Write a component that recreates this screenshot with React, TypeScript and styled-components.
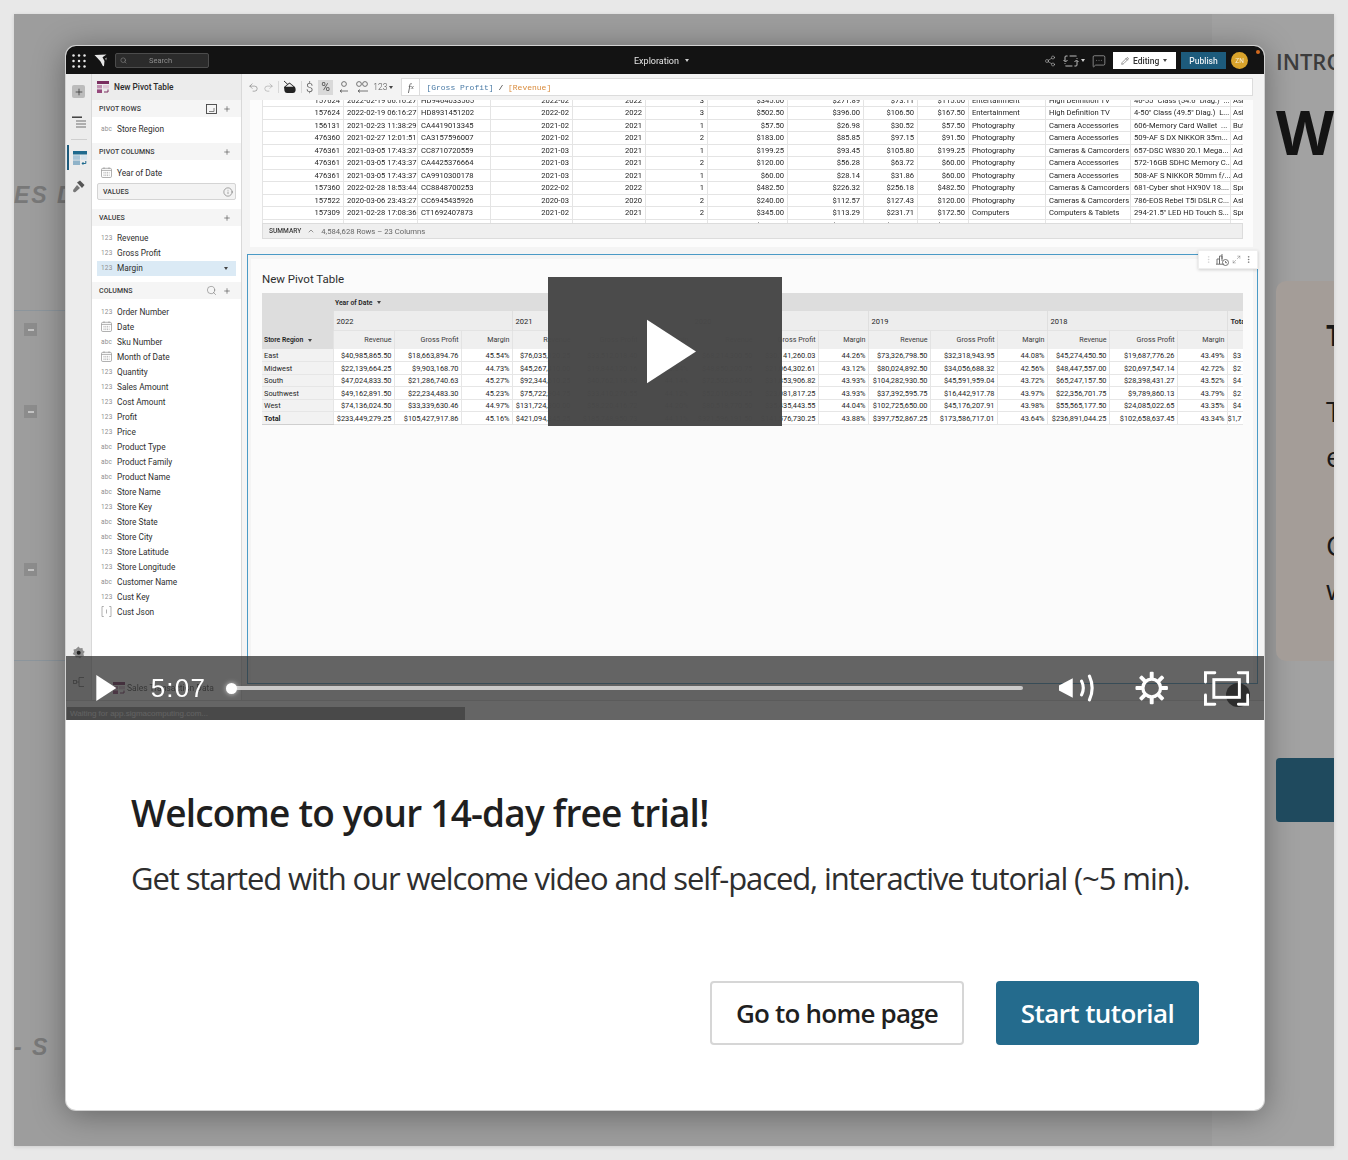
import React from 'react'
import styled, { createGlobalStyle } from 'styled-components'
import {
  ChevronUp,
  Info,
  Maximize2,
  MoreVertical,
  Pencil,
  Plus,
  Redo2,
  Search,
  Share2,
  Undo2,
  MessageSquareMore,
} from 'lucide-react'

const GlobalStyle = createGlobalStyle`
  html, body {
    margin: 0;
    padding: 0;
    background: #e8e8e8;
  }
  * {
    box-sizing: border-box;
  }
`

type FieldKind = '123' | 'abc' | 'date' | 'json'

const COLUMNS: [FieldKind, string][] = [
  ['123', 'Order Number'],
  ['date', 'Date'],
  ['abc', 'Sku Number'],
  ['date', 'Month of Date'],
  ['123', 'Quantity'],
  ['123', 'Sales Amount'],
  ['123', 'Cost Amount'],
  ['123', 'Profit'],
  ['123', 'Price'],
  ['abc', 'Product Type'],
  ['abc', 'Product Family'],
  ['abc', 'Product Name'],
  ['abc', 'Store Name'],
  ['123', 'Store Key'],
  ['abc', 'Store State'],
  ['abc', 'Store City'],
  ['123', 'Store Latitude'],
  ['123', 'Store Longitude'],
  ['abc', 'Customer Name'],
  ['123', 'Cust Key'],
  ['json', 'Cust Json'],
]

const RAW_WIDTHS = [81, 74, 73, 82, 73, 62, 80, 76, 54, 51, 77, 85, 100, 13]
const RAW_LEFT = [false, true, true, false, false, false, false, false, false, false, true, true, true, true]
const RAW_ROWS = [
  ['157624', '2022-02-19 06:16:27', 'HD9464033565', '2022-02', '2022', '3', '$345.00', '$271.89', '$73.11', '$115.00', 'Entertainment', 'High Definition TV', '46-55" Class (54.6" Diag.)  ...', 'Asl'],
  ['157624', '2022-02-19 06:16:27', 'HD8931451202', '2022-02', '2022', '3', '$502.50', '$396.00', '$106.50', '$167.50', 'Entertainment', 'High Definition TV', '4-50" Class (49.5" Diag.)  L...', 'Asl'],
  ['156131', '2021-02-23 11:38:29', 'CA4419013345', '2021-02', '2021', '1', '$57.50', '$26.98', '$30.52', '$57.50', 'Photography', 'Camera Accessories', '606-Memory Card Wallet  ...', 'But'],
  ['476360', '2021-02-27 12:01:51', 'CA3157596007', '2021-02', '2021', '2', '$183.00', '$85.85', '$97.15', '$91.50', 'Photography', 'Camera Accessories', '509-AF S DX NIKKOR 35m...', 'Adi'],
  ['476361', '2021-03-05 17:43:37', 'CC8710720559', '2021-03', '2021', '1', '$199.25', '$93.45', '$105.80', '$199.25', 'Photography', 'Cameras & Camcorders', '657-DSC W830 20.1 Mega...', 'Adi'],
  ['476361', '2021-03-05 17:43:37', 'CA4425376664', '2021-03', '2021', '2', '$120.00', '$56.28', '$63.72', '$60.00', 'Photography', 'Camera Accessories', '572-16GB SDHC Memory C...', 'Adi'],
  ['476361', '2021-03-05 17:43:37', 'CA9910300178', '2021-03', '2021', '1', '$60.00', '$28.14', '$31.86', '$60.00', 'Photography', 'Camera Accessories', '508-AF S NIKKOR 50mm f/...', 'Adi'],
  ['157360', '2022-02-28 18:53:44', 'CC8848700253', '2022-02', '2022', '1', '$482.50', '$226.32', '$256.18', '$482.50', 'Photography', 'Cameras & Camcorders', '681-Cyber shot HX90V 18....', 'Spr'],
  ['157522', '2020-03-06 23:43:27', 'CC6945435926', '2020-03', '2020', '2', '$240.00', '$112.57', '$127.43', '$120.00', 'Photography', 'Cameras & Camcorders', '786-EOS Rebel T5i DSLR C...', 'Asl'],
  ['157309', '2021-02-28 17:08:36', 'CT1692407873', '2021-02', '2021', '2', '$345.00', '$113.29', '$231.71', '$172.50', 'Computers', 'Computers & Tablets', '294-21.5" LED HD Touch S...', 'Spr'],
  ['157344', '2021-02-28 11:21:44', 'CT1694416307', '2021-02', '2021', '1', '$345.00', '$113.29', '$231.71', '$345.00', 'Computers', 'Computers & Tablets', '294-21.5" LED HD Touch S...', 'Spr'],
]

const PIVOT_WIDTHS = [71, 61, 67, 51, 61, 67, 51, 64, 63, 50, 62, 67, 50, 62, 68, 50, 16]
const YEARS: [string, number][] = [
  ['2022', 3],
  ['2021', 3],
  ['2020', 3],
  ['2019', 3],
  ['2018', 3],
]
const PIVOT_ROWS = [
  ['East', '$40,985,865.50', '$18,663,894.76', '45.54%', '$76,035,120.25', '$33,512,018.40', '44.07%', '$68,214,300.50', '$30,141,260.03', '44.26%', '$73,326,798.50', '$32,318,943.95', '44.08%', '$45,274,450.50', '$19,687,776.26', '43.49%', '$3'],
  ['Midwest', '$22,139,664.25', '$9,903,168.70', '44.73%', '$45,267,410.00', '$19,844,120.16', '43.84%', '$48,850,200.75', '$21,064,302.61', '43.12%', '$80,024,892.50', '$34,056,688.32', '42.56%', '$48,447,557.00', '$20,697,547.14', '42.72%', '$2'],
  ['South', '$47,024,833.50', '$21,286,740.63', '45.27%', '$92,344,610.25', '$40,762,118.90', '44.14%', '$72,502,040.00', '$31,853,906.82', '43.93%', '$104,282,930.50', '$45,591,959.04', '43.72%', '$65,247,157.50', '$28,398,431.27', '43.52%', '$4'],
  ['Southwest', '$49,162,891.50', '$22,234,483.30', '45.23%', '$75,722,904.75', '$33,410,276.55', '44.12%', '$52,010,880.25', '$23,081,817.25', '43.93%', '$37,392,595.75', '$16,442,917.78', '43.97%', '$22,356,701.75', '$9,789,860.13', '43.79%', '$2'],
  ['West', '$74,136,024.50', '$33,339,630.46', '44.97%', '$131,724,300.00', '$58,220,416.72', '44.20%', '$80,518,770.50', '$35,435,443.55', '44.04%', '$102,725,650.00', '$45,176,207.91', '43.98%', '$55,565,177.50', '$24,085,022.65', '43.35%', '$4'],
  ['Total', '$233,449,279.25', '$105,427,917.86', '45.16%', '$421,094,345.25', '$185,748,950.73', '44.11%', '$321,596,191.50', '$141,576,730.25', '43.88%', '$397,752,867.25', '$173,586,717.01', '43.64%', '$236,891,044.25', '$102,658,637.45', '43.34%', '$1,7'],
]

const GridIcon = () => (
  <svg width="14" height="14" viewBox="0 0 14 14" fill="#e8e8e8">
    {[1.5, 7, 12.5].flatMap((y) =>
      [1.5, 7, 12.5].map((x) => <circle key={`${x}-${y}`} cx={x} cy={y} r="1.25" />),
    )}
  </svg>
)

const SigmaLogo = () => (
  <svg width="13" height="13" viewBox="0 0 13 13" fill="#e6e6e6">
    <path d="M0.5 1 L12.5 0.5 L8.5 3.2 L10.5 7 L10 12 L9 12.2 L6.5 7.5 Q3.5 4 0.5 1 Z" />
    <path d="M11 4.5 L12.8 3.5 L12.2 6.5 Z" opacity="0.7" />
  </svg>
)

const SwapIcon = () => (
  <svg width="16" height="14" viewBox="0 0 16 14" fill="none" stroke="#cfcfcf" strokeWidth="0.9">
    <path d="M2 7 V3 Q2 2 3 2 H13 Q14 2 14 3 V5 M14 7 V11 Q14 12 13 12 H3 Q2 12 2 11 V9" strokeDasharray="7 2" />
    <path d="M0.5 6 L2.5 8 L4.5 6 M11.5 8 L13.5 6 L15.5 8" />
  </svg>
)

const CalendarIcon = () => (
  <svg width="11" height="11" viewBox="0 0 11 11" fill="none" stroke="#8f8f8f" strokeWidth="0.7">
    <rect x="0.5" y="1.3" width="10" height="9.2" rx="1.3" />
    <path d="M0.5 3.4 H10.5 M3 0.3 V2 M8 0.3 V2" />
    <path d="M2.5 5.4 H8.5 M2.5 7 H8.5 M2.5 8.6 H8.5" strokeDasharray="1 0.8" />
  </svg>
)

const JsonIcon = () => (
  <svg width="11" height="11" viewBox="0 0 11 11" fill="none" stroke="#8f8f8f" strokeWidth="0.7">
    <path d="M2.8 0.5 H1 V10.5 H2.8 M8.2 0.5 H10 V10.5 H8.2 M5.5 3.5 V7.5" />
  </svg>
)

const PivotGlyph = () => (
  <svg width="12" height="12" viewBox="0 0 12 12">
    <rect width="12" height="3" fill="#7a2d5f" />
    <rect y="4" width="5" height="3.4" fill="#c08fb0" />
    <rect y="8.4" width="5" height="3.6" fill="#96487c" />
    <rect x="6" y="4" width="6" height="3.4" fill="#e0c8d7" />
    <path d="M7 11 H11 V8.5" fill="none" stroke="#7a2d5f" strokeWidth="1" />
  </svg>
)

const ActiveTableGlyph = () => (
  <svg width="14" height="14" viewBox="0 0 14 14">
    <rect width="14" height="3.5" fill="#1f6a8e" />
    <rect y="4.3" width="7" height="4.5" fill="#aac6d8" />
    <rect y="9.5" width="7" height="4.5" fill="#8fb3c9" />
    <rect x="7.8" y="4.3" width="6.2" height="4.5" fill="#d5e3ec" />
    <path d="M9 12.5 H12.8 V10 M10.5 11 L9 12.5 L10.5 13.8" fill="none" stroke="#1f6a8e" strokeWidth="1" />
  </svg>
)

const LayersGlyph = () => (
  <svg width="14" height="12" viewBox="0 0 14 12" fill="none" strokeWidth="1.4">
    <path d="M0 1.2 H10" stroke="#333" />
    <path d="M4 5 H14 M4 8 H14 M4 11 H14" stroke="#999" />
  </svg>
)

const HammerGlyph = () => (
  <svg width="13" height="13" viewBox="0 0 13 13" fill="#555">
    <path d="M5 2.5 L8 0.5 L12.5 5 L10 8 Z" />
    <path d="M5 5 L8 8 L3.5 12 Q1.8 12.8 1.2 11.5 Q0.8 10.5 1.5 9.5 Z" fill="#777" />
  </svg>
)

const GearGlyph = () => (
  <svg width="13" height="13" viewBox="0 0 13 13">
    <path d="M6.5 0.5 L8 2.3 L10.5 2 L10.8 4.3 L12.7 5.8 L11.4 7.8 L12 10 L9.7 10.6 L8 12.5 L6.2 11.2 L3.8 11.6 L3.2 9.4 L0.7 8 L2 6 L1.5 3.6 L3.8 3 Z" fill="#8d8d8d" />
    <circle cx="6.7" cy="6.7" r="2" fill="#222" />
  </svg>
)

const TreeGlyph = () => (
  <svg width="12" height="12" viewBox="0 0 12 12" fill="none" stroke="#666" strokeWidth="0.8">
    <rect x="0.5" y="4.5" width="3" height="3" />
    <path d="M3.5 6 H6 M6 1.5 V10.5 M6 1.5 H11 M6 10.5 H11" />
  </svg>
)

const BucketGlyph = () => (
  <svg width="14" height="14" viewBox="0 0 14 14">
    <path d="M1 7 L6.5 2.5 L12 7 Q13 9 12.5 11 Q12 13 10 13 H4 Q2 13 1.5 11 Z" fill="#222" />
    <path d="M1 1 L6.5 6" stroke="#222" strokeWidth="0.9" />
    <path d="M2.5 6.8 L6.5 3.5 L10.5 6.8 Z" fill="#eee" />
  </svg>
)

const DecimalGlyph = ({ double }: { double?: boolean }) => (
  <svg width="14" height="14" viewBox="0 0 14 14" fill="none" stroke="#555" strokeWidth="0.8">
    <circle cx={double ? 4 : 7} cy="4" r="2.4" />
    {double && <circle cx="10" cy="4" r="2.4" />}
    <path d={double ? 'M3 11 H13 M5 9.5 L3 11 L5 12.5' : 'M3 11 H11 M5 9.5 L3 11 L5 12.5'} />
  </svg>
)

const PivotBoxGlyph = () => (
  <svg width="11" height="10" viewBox="0 0 11 10" fill="none" stroke="#444" strokeWidth="0.9">
    <rect x="0.5" y="0.5" width="10" height="9" />
    <path d="M3 7.5 H8 V4" stroke="#777" />
  </svg>
)

const ChartGlyph = () => (
  <svg width="13" height="13" viewBox="0 0 13 13" fill="none" stroke="#666" strokeWidth="0.9">
    <path d="M1 11 V6 H3.5 V11 M3.5 11 V3 H6 V8 M6 1 V6" />
    <path d="M0 11.2 H8" />
    <circle cx="9.5" cy="9.5" r="3" />
    <path d="M9.5 8 V9.7 H11" />
  </svg>
)

const PlayTriangle = ({ w, h }: { w: number; h: number }) => (
  <svg width={w} height={h} viewBox="0 0 20 26" fill="#fff">
    <path d="M0 0 L20 13 L0 26 Z" />
  </svg>
)

const VolumeGlyph = () => (
  <svg width="38" height="30" viewBox="0 0 38 30" fill="none">
    <path d="M1 13 Q1 12 2 12 L15 5 V25 L2 18 Q1 18 1 17 Z" fill="#fff" />
    <path d="M24 8 Q27.5 15 24 22 M32 3 Q37.5 15 32 27" stroke="#fff" strokeWidth="3.2" strokeLinecap="round" />
  </svg>
)

const SunGear = () => (
  <svg width="34" height="34" viewBox="0 0 34 34" fill="none">
    <circle cx="17" cy="17" r="9" stroke="#fff" strokeWidth="3.4" />
    {[0, 45, 90, 135, 180, 225, 270, 315].map((a) => (
      <rect key={a} x="15" y="0.5" width="4" height="7" rx="1" fill="#fff" transform={`rotate(${a} 17 17)`} />
    ))}
  </svg>
)

const FullscreenGlyph = () => (
  <svg width="46" height="35" viewBox="0 0 46 35" fill="none" stroke="#fff" strokeWidth="3" strokeLinecap="round">
    <path d="M11 1.5 H1.5 V11 M35 1.5 H44.5 V11 M11 33.5 H1.5 V24 M35 33.5 H44.5 V24" />
    <rect x="10" y="8.5" width="26" height="18" strokeLinecap="butt" />
  </svg>
)

function FieldTag({ kind }: { kind: FieldKind }) {
  if (kind === 'date') return <CalendarIcon />
  if (kind === 'json') return <JsonIcon />
  return <TypeTag>{kind}</TypeTag>
}

function Field({ kind, label, active }: { kind: FieldKind; label: string; active?: boolean }) {
  return (
    <FieldRow $active={active}>
      <TagSlot>
        <FieldTag kind={kind} />
      </TagSlot>
      {label}
      {active && <MiniCaret />}
    </FieldRow>
  )
}

export default function App() {
  return (
    <>
      <GlobalStyle />
      <Page>
        <Stage>
          <GhostColumn>
            <GhostWord $top={136}>ES D</GhostWord>
            <GhostRule $top={102} />
            <MinusBox $top={12}>
              <i />
            </MinusBox>
            <MinusBox $top={69}>
              <i />
            </MinusBox>
            <MinusBox $top={145}>
              <i />
            </MinusBox>
            <GhostRule $top={84} />
            <GhostWord $top={373}>- S</GhostWord>
          </GhostColumn>

          <Modal>
            <Video>
              <AppShot>
                <TopBar>
                  <GridIcon />
                  <LogoSlot>
                    <SigmaLogo />
                  </LogoSlot>
                  <SearchBox>
                    <Search size={7} color="#888" />
                    <span>Search</span>
                  </SearchBox>
                  <Exploration>
                    Exploration <MiniCaret $light />
                  </Exploration>
                  <TopActions>
                    <Share2 size={12} color="#cfcfcf" strokeWidth={1} />
                    <SwapSlot>
                      <SwapIcon />
                      <MiniCaret $light />
                    </SwapSlot>
                    <MessageSquareMore size={14} color="#cfcfcf" strokeWidth={1} />
                    <EditingButton>
                      <Pencil size={8} color="#222" strokeWidth={1.4} />
                      Editing
                      <MiniCaret />
                    </EditingButton>
                    <PublishButton>Publish</PublishButton>
                    <Avatar>ZN</Avatar>
                  </TopActions>
                  <StatusDot />
                </TopBar>

                <Workspace>
                  <Rail>
                    <RailPlus>
                      <Plus size={10} color="#222" strokeWidth={1.6} />
                    </RailPlus>
                    <RailSlot $top={18}>
                      <LayersGlyph />
                    </RailSlot>
                    <RailDivider />
                    <RailActive>
                      <ActiveTableGlyph />
                    </RailActive>
                    <RailSlot $top={10}>
                      <HammerGlyph />
                    </RailSlot>
                    <RailBottom>
                      <GearGlyph />
                      <TreeGlyph />
                    </RailBottom>
                  </Rail>

                  <Panel>
                    <PanelTitle>
                      <PivotGlyph />
                      New Pivot Table
                    </PanelTitle>
                    <SectionHead>
                      PIVOT ROWS
                      <HeadIcons>
                        <PivotBoxGlyph />
                        <Plus size={8} color="#555" />
                      </HeadIcons>
                    </SectionHead>
                    <FieldGroup $pad="4px 0 7px">
                      <Field kind="abc" label="Store Region" />
                    </FieldGroup>
                    <SectionHead>
                      PIVOT COLUMNS
                      <HeadIcons>
                        <Plus size={8} color="#555" />
                      </HeadIcons>
                    </SectionHead>
                    <FieldGroup $pad="5px 0 3px">
                      <Field kind="date" label="Year of Date" />
                    </FieldGroup>
                    <ValuesBox>
                      VALUES
                      <Info size={10} color="#333" strokeWidth={1} />
                    </ValuesBox>
                    <SectionHead $spaced>
                      VALUES
                      <HeadIcons>
                        <Plus size={8} color="#555" />
                      </HeadIcons>
                    </SectionHead>
                    <FieldGroup $pad="4.5px 0 6.5px">
                      <Field kind="123" label="Revenue" />
                      <Field kind="123" label="Gross Profit" />
                      <Field kind="123" label="Margin" active />
                    </FieldGroup>
                    <SectionHead>
                      COLUMNS
                      <HeadIcons>
                        <Search size={11} color="#555" strokeWidth={1} />
                        <Plus size={8} color="#555" />
                      </HeadIcons>
                    </SectionHead>
                    <FieldGroup $pad="5px 0 0">
                      {COLUMNS.map(([kind, label]) => (
                        <Field key={label} kind={kind} label={label} />
                      ))}
                    </FieldGroup>
                    <PanelFooter>
                      <PivotGlyph />
                      Sales Transaction Data
                    </PanelFooter>
                  </Panel>

                  <Main>
                    <Toolbar>
                      <Undo2 size={11} color="#555" strokeWidth={1} />
                      <Redo2 size={11} color="#888" strokeWidth={1} />
                      <ToolDivider />
                      <BucketGlyph />
                      <ToolDivider />
                      <ToolText $size={13}>$</ToolText>
                      <PercentChip>%</PercentChip>
                      <DecimalGlyph />
                      <DecimalGlyph double />
                      <ToolText $size={8.5}>
                        123 <MiniCaret />
                      </ToolText>
                      <FormulaBox>
                        <FxMark>
                          f<sub>x</sub>
                        </FxMark>
                        <FormulaText>
                          <b>[Gross Profit]</b> / <em>[Revenue]</em>
                        </FormulaText>
                      </FormulaBox>
                    </Toolbar>

                    <Canvas>
                      <TableCard>
                        <RawClip>
                          <RawTable>
                            <colgroup>
                              {RAW_WIDTHS.map((w, i) => (
                                <col key={i} width={w} />
                              ))}
                            </colgroup>
                            <tbody>
                              {RAW_ROWS.map((row, r) => (
                                <tr key={r}>
                                  {row.map((cell, c) => (
                                    <RawCell key={c} $left={RAW_LEFT[c]}>
                                      {cell}
                                    </RawCell>
                                  ))}
                                </tr>
                              ))}
                            </tbody>
                          </RawTable>
                        </RawClip>
                        <SummaryBar>
                          <strong>SUMMARY</strong>
                          <ChevronUp size={8} color="#666" />
                          4,584,628 Rows – 23 Columns
                        </SummaryBar>
                      </TableCard>

                      <SelectedFrame>
                        <FloatTools>
                          <MoreVertical size={9} color="#bbb" strokeWidth={1} />
                          <ChartGlyph />
                          <Maximize2 size={9} color="#555" strokeWidth={1} />
                          <MoreVertical size={9} color="#444" strokeWidth={1.2} />
                        </FloatTools>
                        <PivotCard>
                          <PivotTitle>New Pivot Table</PivotTitle>
                          <PivotGrid>
                            <colgroup>
                              {PIVOT_WIDTHS.map((w, i) => (
                                <col key={i} width={w} />
                              ))}
                            </colgroup>
                            <tbody>
                              <tr>
                                <HeadDark rowSpan={2} />
                                <HeadDark colSpan={16}>
                                  <strong>Year of Date</strong> <MiniCaret />
                                </HeadDark>
                              </tr>
                              <tr>
                                {YEARS.map(([year, span]) => (
                                  <YearCell key={year} colSpan={span}>
                                    {year}
                                  </YearCell>
                                ))}
                                <YearCell>
                                  <strong>Total</strong>
                                </YearCell>
                              </tr>
                              <tr>
                                <HeadDark>
                                  <strong>Store Region</strong> <MiniCaret />
                                </HeadDark>
                                {YEARS.flatMap(([year]) =>
                                  ['Revenue', 'Gross Profit', 'Margin'].map((m) => (
                                    <MeasureCell key={year + m}>{m}</MeasureCell>
                                  )),
                                )}
                                <MeasureCell />
                              </tr>
                              {PIVOT_ROWS.map((row) => (
                                <tr key={row[0]}>
                                  {row.map((cell, c) =>
                                    c === 0 ? (
                                      <RegionCell key={c} $total={row[0] === 'Total'}>
                                        {cell}
                                      </RegionCell>
                                    ) : (
                                      <ValueCell key={c}>{cell}</ValueCell>
                                    ),
                                  )}
                                </tr>
                              ))}
                            </tbody>
                          </PivotGrid>
                        </PivotCard>
                      </SelectedFrame>
                    </Canvas>
                  </Main>
                </Workspace>
                <BottomStrip />
                <HelpBubble />
                <WaitingBar>Waiting for app.sigmacomputing.com...</WaitingBar>
              </AppShot>

              <BigPlay>
                <PlayTriangle w={49} h={67} />
              </BigPlay>

              <Controls>
                <PlayTriangle w={21} h={26} />
                <TimeCode>5:07</TimeCode>
                <Scrubber />
                <VolumeGlyph />
                <SunGear />
                <FullscreenGlyph />
              </Controls>
            </Video>

            <Copy>
              <Heading>Welcome to your 14-day free trial!</Heading>
              <Lead>Get started with our welcome video and self-paced, interactive tutorial (~5 min).</Lead>
              <Actions>
                <GhostButton>Go to home page</GhostButton>
                <PrimaryButton>Start tutorial</PrimaryButton>
              </Actions>
            </Copy>
          </Modal>

          <PeekColumn>
            <Eyebrow>INTRO</Eyebrow>
            <PeekTitle>We</PeekTitle>
            <PeekCard>
              <PeekLetter $top={38} $bold>
                T
              </PeekLetter>
              <PeekLetter $top={44}>T</PeekLetter>
              <PeekLetter $top={13}>e</PeekLetter>
              <PeekLetter $top={57}>C</PeekLetter>
              <PeekLetter $top={12}>w</PeekLetter>
            </PeekCard>
            <PeekButton />
          </PeekColumn>
        </Stage>
      </Page>
    </>
  )
}

const Page = styled.div`
  padding: 14px;
  width: 1348px;
  height: 1160px;
  overflow: hidden;
  background: #e8e8e8;
`
const Stage = styled.div`
  display: flex;
  align-items: flex-start;
  width: 1320px;
  height: 1132px;
  padding-top: 32px;
  overflow: hidden;
  background: linear-gradient(90deg, #9d9d9d 0 1198px, #a2a2a2 1198px);
  box-shadow: 0 1px 4px rgba(0, 0, 0, 0.12);
`
const GhostColumn = styled.div`
  flex: none;
  display: flex;
  flex-direction: column;
  width: 52px;
  overflow: hidden;
`
const GhostWord = styled.div<{ $top: number }>`
  margin-top: ${({ $top }) => $top}px;
  height: 26px;
  font: italic 700 23px/26px 'Liberation Sans', sans-serif;
  letter-spacing: 2px;
  white-space: nowrap;
  color: #787878;
`
const GhostRule = styled.div<{ $top: number }>`
  margin-top: ${({ $top }) => $top}px;
  height: 1px;
  background: #8c959c;
`
const MinusBox = styled.div<{ $top: number }>`
  display: flex;
  align-items: center;
  justify-content: center;
  margin: ${({ $top }) => $top}px 0 0 10px;
  width: 13px;
  height: 13px;
  background: #8c8c8c;
  & > i {
    width: 6px;
    height: 2px;
    background: #c4c4c4;
  }
`
const Modal = styled.div`
  flex: none;
  display: flex;
  flex-direction: column;
  width: 1198px;
  height: 1064px;
  overflow: hidden;
  background: #fff;
  border-radius: 10px;
  box-shadow:
    0 0 0 1px #d2d2d2,
    0 4px 32px rgba(0, 0, 0, 0.38);
`
const Video = styled.div`
  position: relative;
  flex: none;
  height: 674px;
  overflow: hidden;
  background: #f4f4f4;
`
const AppShot = styled.div`
  position: relative;
  display: flex;
  flex-direction: column;
  height: 100%;
  filter: blur(0.3px);
  font-family: Roboto, 'Liberation Sans', sans-serif;
  color: #2a2a2a;
`
const TopBar = styled.div`
  position: relative;
  flex: none;
  display: flex;
  align-items: center;
  height: 28px;
  padding: 1px 16px 0 6px;
  background: #131313;
`
const LogoSlot = styled.div`
  display: flex;
  margin: 0 8px;
`
const SearchBox = styled.div`
  display: flex;
  align-items: center;
  gap: 22px;
  width: 94px;
  height: 15px;
  margin-top: -1px;
  padding-left: 4px;
  background: #2b2b2b;
  border: 1px solid #4c4c4c;
  border-radius: 2px;
  font-size: 7.5px;
  color: #8d8d8d;
`
const Exploration = styled.div`
  display: flex;
  align-items: center;
  gap: 6px;
  margin-left: 425px;
  font-size: 9px;
  color: #e4e4e4;
`
const TopActions = styled.div`
  display: flex;
  align-items: center;
  margin-left: auto;
  gap: 7px;
`
const SwapSlot = styled.div`
  display: flex;
  align-items: center;
  gap: 2px;
`
const EditingButton = styled.div`
  display: flex;
  align-items: center;
  gap: 4px;
  width: 63px;
  height: 17px;
  margin-left: 0;
  padding-left: 8px;
  background: #fff;
  font-size: 8.5px;
  font-weight: 500;
  color: #333;
  & > span {
    margin-left: 0;
  }
`
const PublishButton = styled.div`
  display: flex;
  align-items: center;
  justify-content: center;
  width: 45px;
  height: 17px;
  margin-left: -2px;
  background: #1d5b7c;
  font-size: 8.5px;
  font-weight: 500;
  color: #e8eef2;
`
const Avatar = styled.div`
  display: flex;
  align-items: center;
  justify-content: center;
  width: 17px;
  height: 17px;
  margin-left: -2px;
  border-radius: 50%;
  background: #d9a32b;
  font-size: 6.5px;
  color: #f7ecd0;
`
const StatusDot = styled.span`
  position: absolute;
  top: 4px;
  right: 4px;
  width: 4px;
  height: 4px;
  border-radius: 50%;
  background: #d2691e;
`
const MiniCaret = styled.span<{ $light?: boolean }>`
  display: inline-block;
  margin-left: auto;
  width: 0;
  height: 0;
  border-left: 2.5px solid transparent;
  border-right: 2.5px solid transparent;
  border-top: 3px solid ${({ $light }) => ($light ? '#d0d0d0' : '#444')};
  vertical-align: middle;
`
const Workspace = styled.div`
  flex: none;
  display: flex;
  height: 626px;
`
const Rail = styled.div`
  flex: none;
  display: flex;
  flex-direction: column;
  align-items: center;
  width: 26px;
  padding-top: 11px;
  background: #ececec;
  border-right: 1px solid #d8d8d8;
`
const RailPlus = styled.div`
  display: flex;
  align-items: center;
  justify-content: center;
  width: 13px;
  height: 13px;
  background: #bcbcbc;
  border-radius: 2px;
`
const RailSlot = styled.div<{ $top: number }>`
  display: flex;
  margin-top: ${({ $top }) => $top}px;
`
const RailDivider = styled.div`
  width: 16px;
  height: 1px;
  margin-top: 11px;
  background: #cfcfcf;
`
const RailActive = styled.div`
  display: flex;
  align-items: center;
  align-self: stretch;
  height: 25px;
  margin: 5px 0 0 1px;
  padding-left: 4px;
  border-left: 2px solid #1d5b7c;
`
const RailBottom = styled.div`
  display: flex;
  flex-direction: column;
  align-items: center;
  gap: 17px;
  margin-top: auto;
  padding-bottom: 12px;
`
const Panel = styled.div`
  flex: none;
  display: flex;
  flex-direction: column;
  width: 150px;
  background: #fff;
  border-right: 1px solid #d9d9d9;
`
const PanelTitle = styled.div`
  flex: none;
  display: flex;
  align-items: center;
  gap: 5px;
  height: 26px;
  padding-left: 5px;
  background: #ececec;
  font-size: 8.3px;
  font-weight: 500;
  color: #2a2a2a;
`
const SectionHead = styled.div<{ $spaced?: boolean }>`
  flex: none;
  display: flex;
  align-items: center;
  height: 17px;
  margin-top: ${({ $spaced }) => ($spaced ? 9 : 0)}px;
  padding: 0 10px 0 7px;
  background: #f5f5f5;
  font-size: 7px;
  font-weight: 500;
  letter-spacing: 0.1px;
  color: #3a3a3a;
`
const HeadIcons = styled.div`
  display: flex;
  align-items: center;
  gap: 6px;
  margin-left: auto;
`
const FieldGroup = styled.div<{ $pad: string }>`
  flex: none;
  padding: ${({ $pad }) => $pad};
`
const FieldRow = styled.div<{ $active?: boolean }>`
  display: flex;
  align-items: center;
  height: 15px;
  margin: 0 5px;
  padding: 0 8px 0 4px;
  background: ${({ $active }) => ($active ? '#dbeaf5' : 'transparent')};
  font-size: 8.3px;
  color: #2e2e2e;
`
const TagSlot = styled.span`
  display: inline-flex;
  flex: none;
  width: 16px;
`
const TypeTag = styled.span`
  font-size: 6.5px;
  letter-spacing: 0.2px;
  color: #8f8f8f;
`
const ValuesBox = styled.div`
  flex: none;
  display: flex;
  align-items: center;
  justify-content: space-between;
  height: 17px;
  margin: 0 5px;
  padding: 0 2px 0 5px;
  background: #f3f3f3;
  border: 1px solid #d4d4d4;
  border-radius: 2px;
  font-size: 7px;
  font-weight: 500;
  letter-spacing: 0.1px;
  color: #3a3a3a;
`
const PanelFooter = styled.div`
  flex: none;
  display: flex;
  align-items: center;
  gap: 2px;
  height: 24px;
  margin-top: auto;
  padding-left: 21px;
  font-size: 8.5px;
  color: #444;
`
const Main = styled.div`
  flex: 1;
  min-width: 0;
  display: flex;
  flex-direction: column;
`
const Toolbar = styled.div`
  flex: none;
  display: flex;
  align-items: center;
  gap: 4px;
  height: 26px;
  padding: 0 11px 0 6px;
  background: #f3f3f3;
`
const ToolDivider = styled.span`
  width: 1px;
  height: 12px;
  margin: 0;
  background: #d8d8d8;
`
const ToolText = styled.span<{ $size: number }>`
  display: inline-flex;
  align-items: center;
  gap: 2px;
  font-size: ${({ $size }) => $size}px;
  font-weight: 300;
  color: #555;
`
const PercentChip = styled.span`
  display: flex;
  align-items: center;
  justify-content: center;
  width: 15px;
  height: 15px;
  margin-left: 1px;
  background: #d9d9d9;
  font-size: 12px;
  color: #555;
`
const FormulaBox = styled.div`
  display: flex;
  align-items: center;
  flex: 1;
  height: 18px;
  margin-left: 4px;
  background: #fff;
  border: 1px solid #dcdcdc;
`
const FxMark = styled.span`
  display: flex;
  align-items: center;
  justify-content: center;
  width: 18px;
  height: 100%;
  margin-right: 6px;
  border-right: 1px solid #dcdcdc;
  font: italic 10px 'Liberation Serif', serif;
  color: #555;
  & > sub {
    font-size: 7px;
    vertical-align: baseline;
  }
`
const FormulaText = styled.span`
  font: 8px 'Liberation Mono', monospace;
  color: #333;
  white-space: pre;
  & > b {
    font-weight: 400;
    color: #4a7ba6;
  }
  & > em {
    font-style: normal;
    color: #d98a3a;
  }
`
const Canvas = styled.div`
  flex: 1;
  min-height: 0;
  display: flex;
  flex-direction: column;
  padding-left: 5px;
  background: #f4f4f4;
`
const TableCard = styled.div`
  flex: none;
  height: 147px;
  margin: 0 11px 0 3px;
  padding: 0 10px 0 12px;
  background: #fcfcfc;
`
const RawClip = styled.div`
  height: 123px;
  overflow: hidden;
`
const RawTable = styled.table`
  table-layout: fixed;
  width: 981px;
  margin-top: -6.5px;
  border-collapse: collapse;
  background: #fff;
`
const RawCell = styled.td<{ $left?: boolean }>`
  height: 12.5px;
  padding: 0 3px;
  overflow: hidden;
  border: 1px solid #e4e4e4;
  font-size: 7.6px;
  line-height: 11px;
  white-space: pre;
  text-align: ${({ $left }) => ($left ? 'left' : 'right')};
  color: #1f1f1f;
  &:last-child {
    padding: 0 0 0 2px;
  }
`
const SummaryBar = styled.div`
  display: flex;
  align-items: center;
  gap: 6px;
  height: 16px;
  padding-left: 6px;
  background: #efefef;
  border: 1px solid #dcdcdc;
  font-size: 7.7px;
  color: #666;
  & > strong {
    font-weight: 500;
    color: #3a3a3a;
    font-size: 6.6px;
  }
`
const SelectedFrame = styled.div`
  position: relative;
  flex: none;
  height: 430px;
  margin: 7px 6px 0 0;
  padding: 4px 4px 0 3px;
  border: 1px solid #4a9ac6;
`
const FloatTools = styled.div`
  position: absolute;
  top: -5px;
  right: -1px;
  display: flex;
  align-items: center;
  justify-content: space-between;
  width: 60px;
  height: 19px;
  padding: 0 4px 0 5px;
  background: #fff;
  box-shadow: 0 1px 3px rgba(0, 0, 0, 0.18);
  border: 1px solid #eee;
`
const PivotCard = styled.div`
  height: 100%;
  padding: 13px 10px 0 11px;
  background: #fbfbfb;
`
const PivotTitle = styled.div`
  height: 21px;
  font-size: 11.5px;
  line-height: 14px;
  color: #2e2e2e;
`
const PivotGrid = styled.table`
  table-layout: fixed;
  width: 981px;
  border-collapse: collapse;
  font-size: 7.4px;
  color: #1f1f1f;
`
const HeadDark = styled.td`
  height: 18px;
  padding: 1px 2px 0;
  background: #dddddd;
  font-size: 6.8px;
  white-space: nowrap;
  & > strong {
    font-weight: 600;
    margin-right: 3px;
  }
`
const YearCell = styled.td`
  height: 19px;
  padding: 2px 2px 0 3px;
  overflow: hidden;
  vertical-align: middle;
  background: #ededed;
  border-left: 1px solid #dfdfdf;
  font-size: 7.5px;
  white-space: nowrap;
  & > strong {
    font-weight: 600;
  }
`
const MeasureCell = styled.td`
  height: 19px;
  padding: 0 2px 0 0;
  background: #efefef;
  border-left: 1px solid #e3e3e3;
  border-top: 1px solid #e3e3e3;
  font-size: 7.2px;
  text-align: right;
  color: #3a3a3a;
  white-space: nowrap;
`
const RegionCell = styled.td<{ $total?: boolean }>`
  height: 12.5px;
  padding: 1px 2px 0;
  background: #f2f2f2;
  border-bottom: 1px solid ${({ $total }) => ($total ? '#cfcfcf' : '#e6e6e6')};
  font-weight: ${({ $total }) => ($total ? 700 : 400)};
  white-space: nowrap;
`
const ValueCell = styled.td`
  height: 12.5px;
  padding: 1px 2px 0 0;
  overflow: hidden;
  background: #fff;
  border-left: 1px solid #e6e6e6;
  border-bottom: 1px solid #e6e6e6;
  text-align: right;
  white-space: nowrap;
`
const BottomStrip = styled.div`
  flex: 1;
  background: #fff;
  border-top: 1px solid #d8d8d8;
`
const HelpBubble = styled.span`
  position: absolute;
  right: 14px;
  bottom: 13px;
  width: 24px;
  height: 24px;
  border-radius: 50%;
  background: #222;
`
const WaitingBar = styled.div`
  position: absolute;
  left: 1px;
  bottom: 0;
  width: 398px;
  height: 13px;
  padding-left: 3px;
  background: #909090;
  font: 8px/13px 'Liberation Sans', sans-serif;
  color: #f0f0f0;
`
const BigPlay = styled.div`
  position: absolute;
  top: 231px;
  left: 482px;
  display: flex;
  align-items: center;
  justify-content: center;
  width: 234px;
  height: 149px;
  padding-left: 12px;
  background: rgba(72, 72, 72, 0.985);
`
const Controls = styled.div`
  position: absolute;
  left: 0;
  right: 0;
  bottom: 0;
  display: flex;
  align-items: center;
  height: 64px;
  padding: 0 15px 0 30px;
  background: rgba(50, 50, 50, 0.75);
`
const TimeCode = styled.span`
  margin-left: 34px;
  font: 26px/1 'Liberation Sans', sans-serif;
  letter-spacing: 1.2px;
  color: #fff;
`
const Scrubber = styled.div`
  position: relative;
  flex: none;
  width: 792px;
  height: 4px;
  margin: 0 35px 0 25px;
  background: #c9c9c9;
  border-radius: 2px;
  &::before {
    content: '';
    position: absolute;
    left: -5px;
    top: -3.5px;
    width: 11px;
    height: 11px;
    border-radius: 50%;
    background: #fff;
    box-shadow: 0 0 5px rgba(255, 255, 255, 0.7);
  }
  & + svg + svg {
    margin-left: 40px;
  }
  & + svg + svg + svg {
    margin-left: 35px;
  }
`
const Copy = styled.div`
  flex: 1;
  display: flex;
  flex-direction: column;
  padding: 70px 65px 0;
`
const Heading = styled.h1`
  margin: 0;
  font-family: 'Open Sans', 'Noto Sans', sans-serif;
  font-size: 37px;
  line-height: 46px;
  font-weight: 600;
  letter-spacing: -0.8px;
  white-space: nowrap;
  color: #1f1f1f;
`
const Lead = styled.p`
  margin: 19px 0 0;
  font-family: 'Open Sans', 'Noto Sans', sans-serif;
  font-size: 31px;
  line-height: 46px;
  letter-spacing: -1.1px;
  white-space: nowrap;
  color: #2e2e2e;
`
const Actions = styled.div`
  display: flex;
  justify-content: flex-end;
  gap: 32px;
  margin-top: 80px;
`
const GhostButton = styled.button`
  width: 254px;
  height: 64px;
  padding: 0;
  background: #fff;
  border: 2px solid #d6d6d6;
  border-radius: 4px;
  font-family: 'Open Sans', 'Noto Sans', sans-serif;
  font-size: 26px;
  font-weight: 600;
  letter-spacing: -0.8px;
  color: #1f1f1f;
`
const PrimaryButton = styled(GhostButton)`
  width: 203px;
  background: #246b8d;
  border-color: #246b8d;
  letter-spacing: -0.6px;
  color: #fff;
`
const PeekColumn = styled.div`
  flex: none;
  width: 70px;
  padding: 1px 0 0 12px;
  overflow: hidden;
  font-family: 'Open Sans', 'Noto Sans', sans-serif;
`
const Eyebrow = styled.div`
  height: 28px;
  font-size: 22px;
  line-height: 28px;
  font-weight: 600;
  white-space: nowrap;
  color: #3c3c3c;
`
const PeekTitle = styled.div`
  height: 70px;
  margin-top: 22px;
  font-size: 60px;
  line-height: 70px;
  font-weight: 700;
  letter-spacing: -2px;
  color: #141414;
`
const PeekCard = styled.div`
  display: flex;
  flex-direction: column;
  width: 80px;
  height: 380px;
  margin-top: 114px;
  padding-left: 50px;
  background: #a49d98;
  border-radius: 10px 0 0 10px;
`
const PeekLetter = styled.div<{ $top: number; $bold?: boolean }>`
  height: 32px;
  margin-top: ${({ $top }) => $top}px;
  font-size: 28px;
  line-height: 32px;
  font-weight: ${({ $bold }) => ($bold ? 700 : 400)};
  color: #191919;
`
const PeekButton = styled.div`
  width: 80px;
  height: 64px;
  margin: 97px 0 0;
  background: #1f4a5e;
  border-radius: 4px 0 0 4px;
`
